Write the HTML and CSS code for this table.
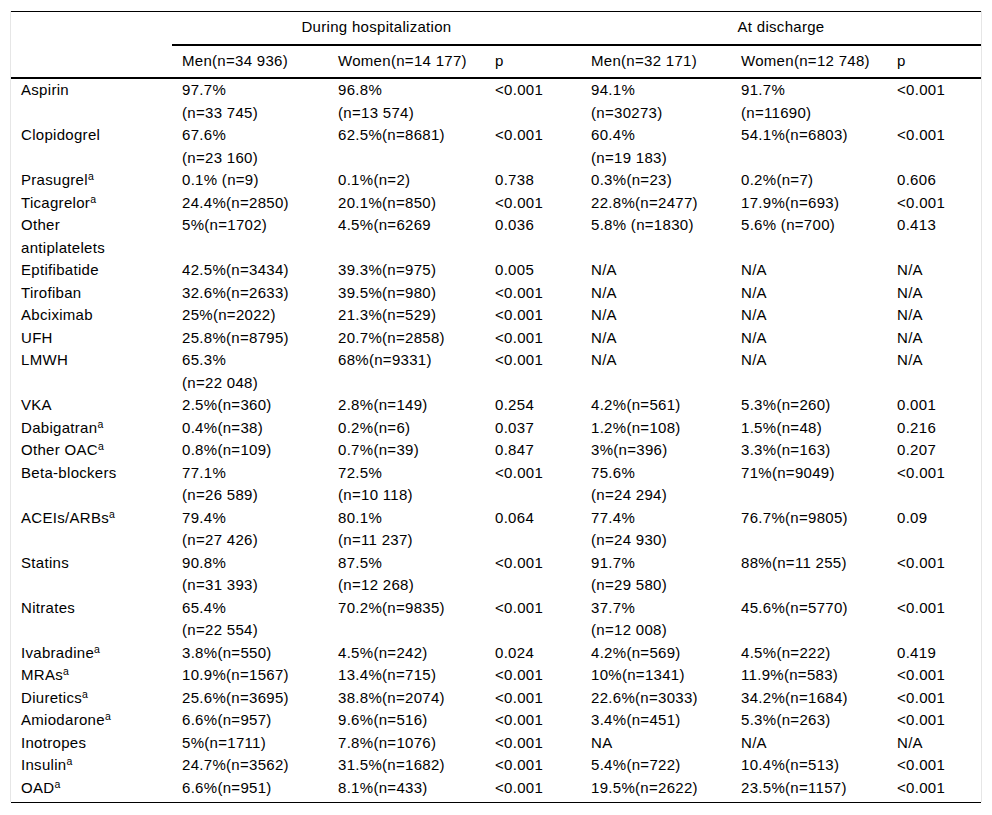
FILE: index.html
```html
<!DOCTYPE html>
<html>
<head>
<meta charset="utf-8">
<link rel="stylesheet" href="styles.css">
</head>
<body>
<div class="wrap">
<table class="data">
<colgroup>
<col class="c0"><col class="c1"><col class="c2"><col class="c3"><col class="c4"><col class="c5"><col class="c6">
</colgroup>
<thead>
<tr class="grp">
<th class="blank" rowspan="2"></th>
<th colspan="3" class="group">During hospitalization</th>
<th colspan="3" class="group">At discharge</th>
</tr>
<tr class="sub">
<th>Men(n=34 936)</th><th>Women(n=14 177)</th><th>p</th>
<th>Men(n=32 171)</th><th>Women(n=12 748)</th><th>p</th>
</tr>
</thead>
<tbody>
<tr><td>Aspirin</td><td>97.7%<br>(n=33 745)</td><td>96.8%<br>(n=13 574)</td><td>&lt;0.001</td><td>94.1%<br>(n=30273)</td><td>91.7%<br>(n=11690)</td><td>&lt;0.001</td></tr>
<tr><td>Clopidogrel</td><td>67.6%<br>(n=23 160)</td><td>62.5%(n=8681)</td><td>&lt;0.001</td><td>60.4%<br>(n=19 183)</td><td>54.1%(n=6803)</td><td>&lt;0.001</td></tr>
<tr><td>Prasugrel<sup>a</sup></td><td>0.1% (n=9)</td><td>0.1%(n=2)</td><td>0.738</td><td>0.3%(n=23)</td><td>0.2%(n=7)</td><td>0.606</td></tr>
<tr><td>Ticagrelor<sup>a</sup></td><td>24.4%(n=2850)</td><td>20.1%(n=850)</td><td>&lt;0.001</td><td>22.8%(n=2477)</td><td>17.9%(n=693)</td><td>&lt;0.001</td></tr>
<tr><td>Other<br>antiplatelets</td><td>5%(n=1702)</td><td>4.5%(n=6269</td><td>0.036</td><td>5.8% (n=1830)</td><td>5.6% (n=700)</td><td>0.413</td></tr>
<tr><td>Eptifibatide</td><td>42.5%(n=3434)</td><td>39.3%(n=975)</td><td>0.005</td><td>N/A</td><td>N/A</td><td>N/A</td></tr>
<tr><td>Tirofiban</td><td>32.6%(n=2633)</td><td>39.5%(n=980)</td><td>&lt;0.001</td><td>N/A</td><td>N/A</td><td>N/A</td></tr>
<tr><td>Abciximab</td><td>25%(n=2022)</td><td>21.3%(n=529)</td><td>&lt;0.001</td><td>N/A</td><td>N/A</td><td>N/A</td></tr>
<tr><td>UFH</td><td>25.8%(n=8795)</td><td>20.7%(n=2858)</td><td>&lt;0.001</td><td>N/A</td><td>N/A</td><td>N/A</td></tr>
<tr><td>LMWH</td><td>65.3%<br>(n=22 048)</td><td>68%(n=9331)</td><td>&lt;0.001</td><td>N/A</td><td>N/A</td><td>N/A</td></tr>
<tr><td>VKA</td><td>2.5%(n=360)</td><td>2.8%(n=149)</td><td>0.254</td><td>4.2%(n=561)</td><td>5.3%(n=260)</td><td>0.001</td></tr>
<tr><td>Dabigatran<sup>a</sup></td><td>0.4%(n=38)</td><td>0.2%(n=6)</td><td>0.037</td><td>1.2%(n=108)</td><td>1.5%(n=48)</td><td>0.216</td></tr>
<tr><td>Other OAC<sup>a</sup></td><td>0.8%(n=109)</td><td>0.7%(n=39)</td><td>0.847</td><td>3%(n=396)</td><td>3.3%(n=163)</td><td>0.207</td></tr>
<tr><td>Beta-blockers</td><td>77.1%<br>(n=26 589)</td><td>72.5%<br>(n=10 118)</td><td>&lt;0.001</td><td>75.6%<br>(n=24 294)</td><td>71%(n=9049)</td><td>&lt;0.001</td></tr>
<tr><td>ACEIs/ARBs<sup>a</sup></td><td>79.4%<br>(n=27 426)</td><td>80.1%<br>(n=11 237)</td><td>0.064</td><td>77.4%<br>(n=24 930)</td><td>76.7%(n=9805)</td><td>0.09</td></tr>
<tr><td>Statins</td><td>90.8%<br>(n=31 393)</td><td>87.5%<br>(n=12 268)</td><td>&lt;0.001</td><td>91.7%<br>(n=29 580)</td><td>88%(n=11 255)</td><td>&lt;0.001</td></tr>
<tr><td>Nitrates</td><td>65.4%<br>(n=22 554)</td><td>70.2%(n=9835)</td><td>&lt;0.001</td><td>37.7%<br>(n=12 008)</td><td>45.6%(n=5770)</td><td>&lt;0.001</td></tr>
<tr><td>Ivabradine<sup>a</sup></td><td>3.8%(n=550)</td><td>4.5%(n=242)</td><td>0.024</td><td>4.2%(n=569)</td><td>4.5%(n=222)</td><td>0.419</td></tr>
<tr><td>MRAs<sup>a</sup></td><td>10.9%(n=1567)</td><td>13.4%(n=715)</td><td>&lt;0.001</td><td>10%(n=1341)</td><td>11.9%(n=583)</td><td>&lt;0.001</td></tr>
<tr><td>Diuretics<sup>a</sup></td><td>25.6%(n=3695)</td><td>38.8%(n=2074)</td><td>&lt;0.001</td><td>22.6%(n=3033)</td><td>34.2%(n=1684)</td><td>&lt;0.001</td></tr>
<tr><td>Amiodarone<sup>a</sup></td><td>6.6%(n=957)</td><td>9.6%(n=516)</td><td>&lt;0.001</td><td>3.4%(n=451)</td><td>5.3%(n=263)</td><td>&lt;0.001</td></tr>
<tr><td>Inotropes</td><td>5%(n=1711)</td><td>7.8%(n=1076)</td><td>&lt;0.001</td><td>NA</td><td>N/A</td><td>N/A</td></tr>
<tr><td>Insulin<sup>a</sup></td><td>24.7%(n=3562)</td><td>31.5%(n=1682)</td><td>&lt;0.001</td><td>5.4%(n=722)</td><td>10.4%(n=513)</td><td>&lt;0.001</td></tr>
<tr><td>OAD<sup>a</sup></td><td>6.6%(n=951)</td><td>8.1%(n=433)</td><td>&lt;0.001</td><td>19.5%(n=2622)</td><td>23.5%(n=1157)</td><td>&lt;0.001</td></tr>
</tbody>
</table>
</div>
<div class="endrule"></div>
</body>
</html>
```
FILE: styles.css
```css
html, body {
  margin: 0;
  padding: 0;
  background: #ffffff;
}
body {
  padding: 11px 10px 0 10px;
  font-family: "Liberation Sans", Arial, sans-serif;
  font-size: 15px;
  letter-spacing: 0.3px;
  color: #000000;
}
.wrap {
  width: 970px;
  border-left: 1px solid #e6e6e6;
  border-right: 1px solid #e6e6e6;
  padding-bottom: 3px;
}
.data {
  width: 970px;
  border-collapse: collapse;
  table-layout: fixed;
  border-top: 1px solid #000;
}
.c0 { width: 161px; }
.c1 { width: 156px; }
.c2 { width: 157px; }
.c3 { width: 96px; }
.c4 { width: 150px; }
.c5 { width: 156px; }
.c6 { width: 94px; }
th {
  font-weight: normal;
  text-align: left;
  padding: 4px 10px 5px 10px;
  line-height: 22.5px;
  vertical-align: middle;
}
th.group {
  text-align: center;
  border-bottom: 2px solid #000;
}
tr.sub th {
  border-bottom: 2px solid #000;
}
th.blank {
  border-bottom: 2px solid #000;
}
td {
  padding: 0 10px;
  line-height: 22.5px;
  vertical-align: top;
  white-space: nowrap;
}
sup {
  font-size: 0.7em;
  line-height: 0;
  letter-spacing: 0;
  vertical-align: 0.45em;
}
.endrule {
  width: 970px;
  margin-left: 1px;
  border-top: 1px solid #000;
}
```
